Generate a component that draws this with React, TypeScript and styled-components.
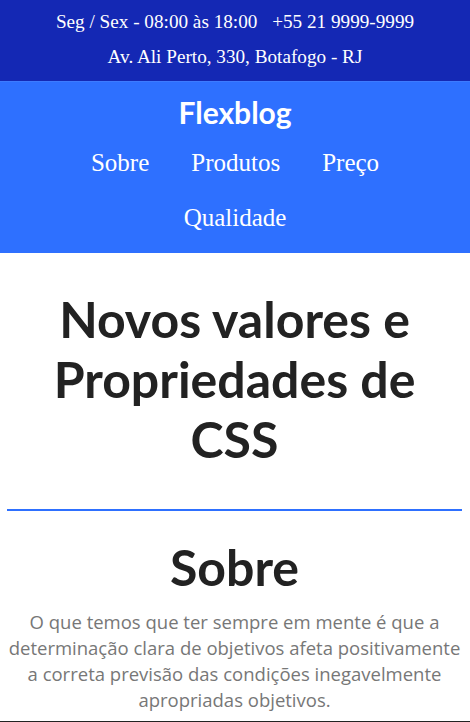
import styled, { createGlobalStyle } from 'styled-components'

const GlobalStyle = createGlobalStyle`
  * { box-sizing: border-box; }
  body {
    margin: 0;
    font-family: 'Liberation Serif', 'Times New Roman', serif;
    background: #fff;
  }
`

const TopBar = styled.div`
  background: #1428b4;
  color: #fff;
  font-size: 19.2px;
  text-align: center;
  padding: 11px 0 13px;
  border-bottom: 1px solid #3d7bff;
`

const TopLine = styled.p`
  margin: 0 0 13px;
  line-height: 22px;

  &:last-child {
    margin-bottom: 0;
  }
`

const Phone = styled.span`
  margin-left: 10px;
`

const Header = styled.header`
  background: #2e70ff;
  color: #fff;
  text-align: center;
  padding: 12px 0 8px;
`

const Logo = styled.h1`
  margin: 0 0 5px;
  font-family: Lato, 'Noto Sans', sans-serif;
  font-weight: 700;
  font-size: 30px;
  line-height: 36px;
`

const Nav = styled.nav`
  display: flex;
  flex-wrap: wrap;
  justify-content: center;
`

const NavLink = styled.a`
  color: #fff;
  text-decoration: none;
  font-size: 25px;
  line-height: 28px;
  padding: 13.5px 21px;
`

const Main = styled.main`
  padding: 0 8px 0 7px;
  text-align: center;
  font-family: Lato, 'Noto Sans', sans-serif;
`

const Title = styled.h2`
  margin: 0;
  padding: 36px 0 40px;
  font-size: 50px;
  line-height: 60px;
  font-weight: 700;
  color: #222;
  border-bottom: 2px solid #2e70ff;
`

const SectionTitle = styled.h3`
  margin: 0;
  padding: 30px 0 16px;
  font-size: 50px;
  line-height: 52px;
  font-weight: 700;
  color: #222;
`

const Text = styled.p`
  margin: 0;
  padding-bottom: 8px;
  font-family: 'Open Sans', 'Noto Sans', sans-serif;
  font-size: 18.5px;
  line-height: 26px;
  color: #777;
`

const Footer = styled.footer`
  background: #222;
  height: 2px;
`

export default function App() {
  return (
    <>
      <GlobalStyle />
      <TopBar>
        <TopLine>
          Seg / Sex - 08:00 às 18:00 <Phone>+55 21 9999-9999</Phone>
        </TopLine>
        <TopLine>Av. Ali Perto, 330, Botafogo - RJ</TopLine>
      </TopBar>
      <Header>
        <Logo>Flexblog</Logo>
        <Nav>
          <NavLink href="#sobre">Sobre</NavLink>
          <NavLink href="#produtos">Produtos</NavLink>
          <NavLink href="#preco">Preço</NavLink>
          <NavLink href="#qualidade">Qualidade</NavLink>
        </Nav>
      </Header>
      <Main>
        <Title>Novos valores e Propriedades de CSS</Title>
        <section id="sobre">
          <SectionTitle>Sobre</SectionTitle>
          <Text>
            O que temos que ter sempre em mente é que a determinação clara de objetivos afeta
            positivamente a correta previsão das condições inegavelmente apropriadas objetivos.
          </Text>
        </section>
      </Main>
      <Footer />
    </>
  )
}
